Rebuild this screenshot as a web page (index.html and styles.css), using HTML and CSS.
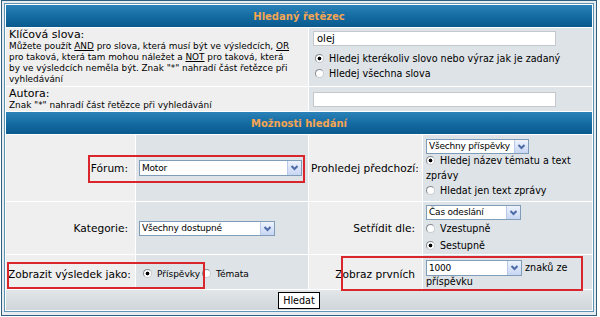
FILE: index.html
```html
<!DOCTYPE html>
<html lang="cs">

<head>
    <meta charset="UTF-8">
    <title>Hledat</title>
    <link rel="stylesheet" href="styles.css">
</head>

<body>

    <div class="frame">
        <table class="forumline">
            <colgroup>
                <col class="c1">
                <col class="c2">
                <col class="c3">
                <col class="c4">
            </colgroup>
            <tr class="r-head">
                <th colspan="4" class="thHead">Hledaný řetězec</th>
            </tr>
            <tr class="r-keywords">
                <td colspan="2" class="row1 desc">
                    <span class="gen">Klíčová slova:</span><br>
                    <span class="gensmall">Můžete použít <u>AND</u> pro slova, která musí být ve výsledcích, <u>OR</u> pro taková, která tam mohou náležet a <u>NOT</u> pro taková, která by ve výsledcích neměla být. Znak "*" nahradí část řetězce při vyhledávání</span>
                </td>
                <td colspan="2" class="row2 pad">
                    <input type="text" class="post" value="olej">
                    <label class="opt"><input type="radio" name="terms" checked>Hledej kterékoliv slovo nebo výraz jak je zadaný</label>
                    <label class="opt"><input type="radio" name="terms">Hledej všechna slova</label>
                </td>
            </tr>
            <tr class="r-author">
                <td colspan="2" class="row1">
                    <span class="gen">Autora:</span><br>
                    <span class="gensmall">Znak "*" nahradí část řetězce při vyhledávání</span>
                </td>
                <td colspan="2" class="row2 pad">
                    <input type="text" class="post" value="">
                </td>
            </tr>
            <tr class="r-head">
                <th colspan="4" class="thHead">Možnosti hledání</th>
            </tr>
            <tr class="r-forum">
                <td class="row1 label">Fórum:</td>
                <td class="row2 ctl">
                    <span class="sel w-forum"><select><option>Motor</option></select><span class="arr"><svg viewBox="0 0 13 13"><path d="M3.5 5 L6.5 8 L9.5 5"/></svg></span></span>
                </td>
                <td class="row1 label">Prohledej předchozí:</td>
                <td class="row2 ctl stack">
                    <span class="sel blk w-time"><select><option>Všechny příspěvky</option></select><span class="arr"><svg viewBox="0 0 13 13"><path d="M3.5 5 L6.5 8 L9.5 5"/></svg></span></span>
                    <label class="opt"><input type="radio" name="fields" checked>Hledej název tématu a text zprávy</label>
                    <label class="opt"><input type="radio" name="fields">Hledat jen text zprávy</label>
                </td>
            </tr>
            <tr class="r-cat">
                <td class="row1 label">Kategorie:</td>
                <td class="row2 ctl">
                    <span class="sel w-cat"><select><option>Všechny dostupné</option></select><span class="arr"><svg viewBox="0 0 13 13"><path d="M3.5 5 L6.5 8 L9.5 5"/></svg></span></span>
                </td>
                <td class="row1 label">Setřídit dle:</td>
                <td class="row2 ctl stack">
                    <span class="sel blk w-sort"><select><option>Čas odeslání</option></select><span class="arr"><svg viewBox="0 0 13 13"><path d="M3.5 5 L6.5 8 L9.5 5"/></svg></span></span>
                    <label class="opt"><input type="radio" name="dir">Vzestupně</label>
                    <label class="opt"><input type="radio" name="dir" checked>Sestupně</label>
                </td>
            </tr>
            <tr class="r-show">
                <td class="row1 label">Zobrazit výsledek jako:</td>
                <td class="row2 ctl">
                    <label class="inl"><input type="radio" name="show" checked>Příspěvky</label><label class="inl"><input type="radio" name="show">Témata</label>
                </td>
                <td class="row1 label">Zobraz prvních</td>
                <td class="row2 ctl chars">
                    <span class="sel w-chars"><select><option>1000</option></select><span class="arr"><svg viewBox="0 0 13 13"><path d="M3.5 5 L6.5 8 L9.5 5"/></svg></span></span> znaků ze příspěvku
                </td>
            </tr>
            <tr class="r-bottom">
                <td colspan="4" class="catBottom"><button class="liteoption">Hledat</button></td>
            </tr>
        </table>

        <div class="mark mark-forum"></div>
        <div class="mark mark-show"></div>
        <div class="mark mark-chars"></div>
    </div>

</body>

</html>
```

FILE: styles.css
```css
body {
    margin: 0;
    background: #ffffff;
    font-family: "DejaVu Sans", Verdana, sans-serif;
    color: #000;
}

.frame {
    position: relative;
    width: 590px;
    height: 310px;
    margin-left: 1px;
    padding: 2px;
    border: 1px solid #2f5f80;
    background: #e6ecef;
}

.forumline {
    width: 100%;
    border: 1px solid #5f93b4;
    border-spacing: 1px;
    background: #ffffff;
    table-layout: fixed;
    font-size: 9px;
    line-height: 11px;
}

.c1 { width: 129px; }
.c2 { width: 172px; }
.c3 { width: 113px; }

td, th {
    padding: 0;
}

/* row heights */
.r-head { height: 22px; }
.r-keywords { height: 58px; }
.r-author { height: 24px; }
.r-forum { height: 66px; }
.r-cat { height: 52px; }
.r-show { height: 34px; }
.r-bottom { height: 20px; }

.thHead {
    background: linear-gradient(#2a82b9, #136aa1 55%, #0a5a8d);
    color: #f5a552;
    font-size: 10px;
    font-weight: bold;
    text-align: center;
}

.row1 {
    background: #efefef;
}

.row2 {
    background: #dee3e7;
}

.gen {
    font-size: 11px;
    line-height: 12px;
}

.gensmall {
    font-size: 8.9px;
    line-height: 11px;
}

.r-keywords td,
.r-author td {
    padding: 0 3px;
    vertical-align: middle;
}

.r-keywords .desc {
    padding-right: 12px;
}

.r-keywords .pad {
    vertical-align: top;
    padding-top: 3px;
}

.pad {
    padding-left: 4px !important;
}

input.post {
    display: block;
    width: 243px;
    height: 15px;
    box-sizing: border-box;
    margin: 0;
    padding: 0 3px;
    border: 1px solid #c4c8cc;
    background: #fff;
    font-family: inherit;
    font-size: 10px;
}

.opt {
    display: block;
    font-size: 9.6px;
    line-height: 15px;
}

.r-keywords .opt {
    padding-left: 2px;
}

.r-keywords .opt:first-of-type {
    margin-top: 5px;
}

.r-cat .opt {
    line-height: 17px;
}

input[type="radio"] {
    appearance: none;
    width: 9px;
    height: 9px;
    margin: 0 5px 0 0;
    border: 1px solid #868b90;
    border-right-color: #c9ccd0;
    border-bottom-color: #c9ccd0;
    border-radius: 50%;
    background: #fff;
    vertical-align: -1px;
}

input[type="radio"]:checked {
    background: radial-gradient(circle, #000 0 1.6px, #fff 2.2px);
}

.label {
    padding: 0 7px 0 2px;
    text-align: right;
    white-space: nowrap;
    font-size: 10.6px;
    vertical-align: middle;
}

.ctl {
    padding: 0 3px;
    vertical-align: middle;
}

.r-show td {
    padding-top: 4px;
}

.ctl.stack {
    vertical-align: top;
    padding-top: 4px;
}

.r-cat .ctl.stack {
    padding-top: 3px;
}

.r-forum .stack .opt:first-of-type {
    margin-top: -1px;
}

.sel {
    display: inline-flex;
    box-sizing: border-box;
    height: 15px;
    border: 1px solid #7f9db9;
    background: #fff;
    vertical-align: middle;
}

.sel.blk {
    display: flex;
}

.sel select {
    flex: 1;
    min-width: 0;
    height: 100%;
    appearance: none;
    border: none;
    background: transparent;
    padding: 0 2px;
    margin: 0;
    font-family: inherit;
    font-size: 9px;
    letter-spacing: -0.2px;
    line-height: 13px;
    color: #000;
    outline: none;
}

.arr {
    width: 13px;
    background: linear-gradient(#eef3fd, #c8d6f3);
    border-left: 1px solid #b9c9ea;
}

.arr svg {
    display: block;
    width: 13px;
    height: 13px;
    fill: none;
    stroke: #4d6ba6;
    stroke-width: 2;
}

.w-forum { width: 163px; height: 16px; }
.w-time { width: 103px; }
.w-cat { width: 136px; }
.w-sort { width: 95px; }
.w-chars { width: 96px; height: 16px; }

.inl {
    font-size: 9px;
    margin-right: 2px;
    padding-left: 4px;
}

.inl + .inl {
    padding-left: 0;
}

.chars {
    font-size: 9.6px;
    line-height: 12px;
}

.catBottom {
    background: linear-gradient(#e2e6e9, #cfd5d9);
    text-align: center;
    vertical-align: middle;
}

.liteoption {
    height: 17px;
    padding: 0 4px;
    border: 1px solid #000;
    background: #fff;
    font-family: inherit;
    font-size: 9.6px;
    color: #000;
}

.mark {
    position: absolute;
    border: 2px solid #d9262d;
    box-sizing: border-box;
}

.mark-forum {
    left: 86px;
    top: 154px;
    width: 217px;
    height: 28px;
}

.mark-show {
    left: 5px;
    top: 261px;
    width: 198px;
    height: 27px;
}

.mark-chars {
    left: 339px;
    top: 255px;
    width: 242px;
    height: 35px;
}
```
